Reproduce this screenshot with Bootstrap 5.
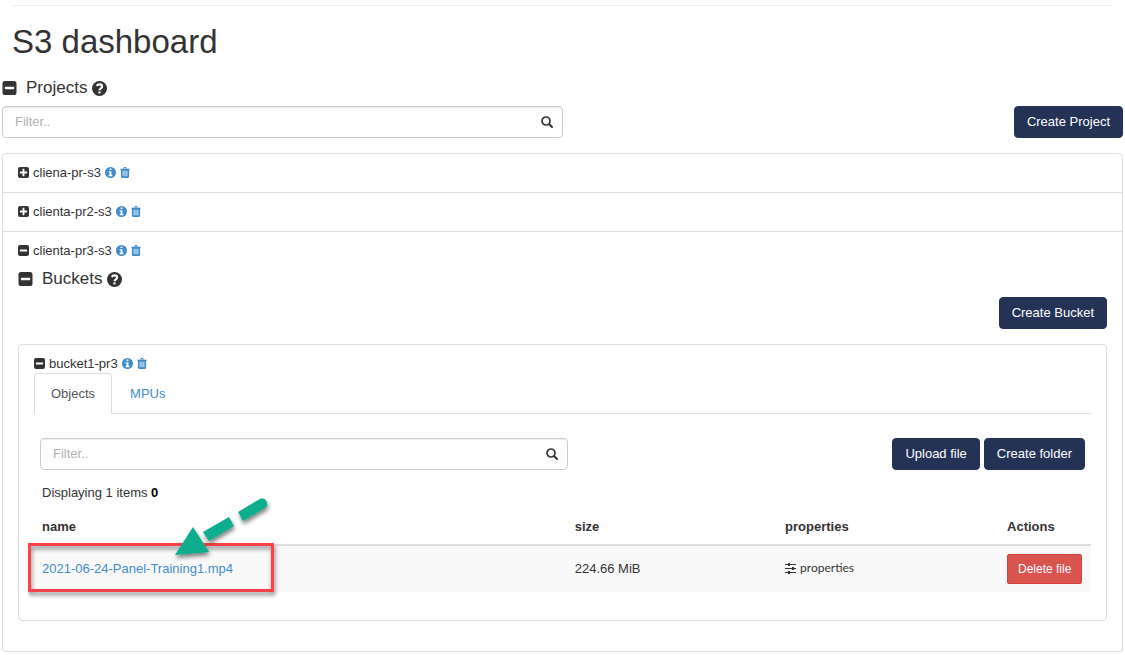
<!DOCTYPE html>
<html lang="en">
<head>
<meta charset="utf-8">
<meta name="viewport" content="width=device-width, initial-scale=1">
<title>S3 dashboard</title>
<link rel="stylesheet" href="https://cdn.jsdelivr.net/npm/bootstrap@5.3.0/dist/css/bootstrap.min.css">
<style>
  body { font-family: "Liberation Sans", Arial, sans-serif; font-size: 13px; line-height: 18px; color: #333; background: #fff; }
  a { color: #428bca; text-decoration: none; }
  .page { padding: 5px 2px 3px; }
  .top-rule { margin: 0 11px 0 10px; border-top: 1px solid #eee; opacity: 1; }
  h1 { font-size: 33px; line-height: 36px; font-weight: 400; margin: 18px 10px 17px; }
  .section-head { display: flex; align-items: center; height: 22px; }
  .section-head h2 { font-size: 17px; line-height: 22px; font-weight: 400; margin: 0 5px 0 9px; }
  .toolbar { margin: 7px 0 15px; }
  .icon-btn { border: 0; padding: 0; background: none; color: inherit; display: inline-flex; }
  svg { display: block; }
  .filter-box { width: 50%; }
  .tab-body .filter-box { width: calc(50% + 5px); }
  .filter-box .form-control { height: 32px; font-size: 13px; line-height: 18px; padding: 5px 36px 7px 12px; border-color: #ccc; border-radius: 4px; box-shadow: inset 0 1px 1px rgba(0,0,0,.075); color: #333; }
  .filter-box .form-control::placeholder { color: #b0b0b0; opacity: 1; }
  .filter-box .icon-btn { position: absolute; right: 10px; top: 10px; }
  .btn-navy { --bs-btn-bg: #243256; --bs-btn-color: #fff; --bs-btn-border-color: #243256; --bs-btn-hover-bg: #1b2745; --bs-btn-hover-color: #fff; --bs-btn-font-size: 13px; --bs-btn-line-height: 18px; --bs-btn-padding-x: 12px; --bs-btn-padding-y: 6px; --bs-btn-border-radius: 4px; }
  .btn-remove { --bs-btn-bg: #d9534f; --bs-btn-color: #fff; --bs-btn-border-color: #d43f3a; --bs-btn-hover-bg: #c9302c; --bs-btn-hover-color: #fff; --bs-btn-font-size: 12px; --bs-btn-line-height: 18px; --bs-btn-padding-x: 10px; --bs-btn-padding-y: 5px; --bs-btn-border-radius: 2px; }
  .btn { white-space: nowrap; }
  .btn-navy { height: 32px; }
  .list-group { --bs-list-group-border-color: #ddd; --bs-list-group-color: #333; --bs-list-group-item-padding-x: 15px; --bs-list-group-item-padding-y: 10px; --bs-list-group-border-radius: 4px; }
  .open-project { padding-bottom: 30px; }
  .item-line { display: flex; align-items: center; gap: 4px; height: 18px; }
  .item-line svg { margin-bottom: 1px; }
  .nav-tabs { --bs-nav-tabs-border-color: #ddd; --bs-nav-tabs-link-active-color: #555; --bs-nav-tabs-link-active-border-color: #ddd #ddd #fff; --bs-nav-tabs-border-radius: 4px; --bs-nav-link-color: #428bca; --bs-nav-link-padding-x: 16px; --bs-nav-link-padding-y: 10px; gap: 1px; line-height: 19px; }
  .tab-body { padding: 24px 6px 0; }
  .count-line { margin: 14px 0 8px; padding: 0 8px; }
  .files { --bs-table-color: #333; --bs-table-striped-color: #333; --bs-table-striped-bg: #f9f9f9; border-color: #ddd; table-layout: fixed; margin-bottom: 18px; }
  .files > :not(caption) > * > * { padding: 8px; border: 0; vertical-align: middle; }
  .files > thead > tr > th { border-bottom: 2px solid #ddd; }
  .col-name { width: 50.4%; }
  .col-size { width: 19.9%; }
  .col-prop { width: 21%; }
  .prop-link { font: 12px/18px Lato, sans-serif; color: #333; }
  .callout { position: absolute; left: -14px; top: -76px; pointer-events: none; }
</style>
</head>
<body>
<svg width="0" height="0" class="position-absolute" aria-hidden="true">
  <symbol id="minus" viewBox="0 0 12 12"><path fill="currentColor" fill-rule="evenodd" d="M2.2 0h7.6A2.2 2.2 0 0 1 12 2.2v7.6A2.2 2.2 0 0 1 9.8 12H2.2A2.2 2.2 0 0 1 0 9.8V2.2A2.2 2.2 0 0 1 2.2 0ZM2.4 5a.4.4 0 0 0-.4.4v1.2c0 .2.2.4.4.4h7.2c.2 0 .4-.2.4-.4V5.400a.4.4 0 0 0-.4-.4Z"/></symbol>
  <symbol id="plus" viewBox="0 0 12 12"><path fill="currentColor" fill-rule="evenodd" d="M2.2 0h7.6A2.2 2.2 0 0 1 12 2.2v7.6A2.2 2.2 0 0 1 9.8 12H2.2A2.2 2.2 0 0 1 0 9.8V2.2A2.2 2.2 0 0 1 2.2 0ZM5 2.4V5H2.400a.4.4 0 0 0-.4.4v1.200c0 .2.2.4.4.4H5v2.600c0 .2.2.4.4.4h1.200c.2 0 .4-.2.4-.4V7h2.600c.2 0 .4-.2.4-.4V5.400c0-.2-.2-.4-.4-.4H7V2.400c0-.2-.2-.4-.4-.4H5.400c-.2 0-.4.2-.4.4Z"/></symbol>
  <symbol id="info" viewBox="0 0 12 12"><circle cx="6" cy="6" r="6" fill="currentColor"/><path fill="#fff" d="M5 1.500h2v1.700H5zM4 4.500h3v4h1V10H4V8.500h1V6H4z"/></symbol>
  <symbol id="help" viewBox="0 0 14 14"><circle cx="7" cy="7" r="7" fill="currentColor"/><path fill="none" stroke="#fff" stroke-width="2" d="M4.500 4.700C5 3.500 6 3.100 7 3.100c1.300 0 2.400.8 2.400 2 0 1.700-2.400 1.700-2.400 3.600"/><path fill="#fff" d="M6 9.700h2v1.900H6z"/></symbol>
  <symbol id="trash" viewBox="0 0 11 12"><path fill="currentColor" fill-rule="evenodd" d="M3.500 1.800 4 .5Q4.200 0 4.700 0h1.600Q6.800 0 7 .5l.5 1.300H11v1h-1v7.700q0 1.500-1.300 1.500H2.300Q1 12 1 10.500V2.800H0v-1ZM4.600 1.800h1.800L6.200 1H4.800ZM3 4.200v6h.9v-6ZM5.050 4.200v6h.9v-6ZM7.100 4.200v6H8v-6Z"/></symbol>
  <symbol id="search" viewBox="0 0 12 12"><circle cx="5" cy="5" r="4" fill="none" stroke="currentColor" stroke-width="1.700"/><path d="m8 8 3 3" stroke="currentColor" stroke-width="2" stroke-linecap="round"/></symbol>
</svg>

<main class="page">
  <hr class="top-rule">
  <h1>S3 dashboard</h1>

  <section>
    <div class="section-head">
      <button class="icon-btn" type="button" aria-label="Collapse projects"><svg width="15" height="14"><use href="#minus"/></svg></button>
      <h2>Projects</h2>
      <svg width="15" height="15"><use href="#help"/></svg>
    </div>
    <div class="toolbar d-flex justify-content-between">
      <div class="filter-box position-relative">
        <input class="form-control" type="text" placeholder="Filter.." aria-label="Filter projects">
        <button class="icon-btn" type="button" aria-label="Search projects"><svg width="12" height="12"><use href="#search"/></svg></button>
      </div>
      <button class="btn btn-navy" type="button">Create Project</button>
    </div>

    <ul class="list-group">
      <li class="list-group-item">
        <div class="item-line">
          <button class="icon-btn" type="button" aria-label="Expand"><svg width="11" height="11"><use href="#plus"/></svg></button>
          <span>cliena-pr-s3</span>
          <a href="#" aria-label="Info"><svg width="11" height="11"><use href="#info"/></svg></a>
          <a href="#" aria-label="Delete"><svg width="10" height="11"><use href="#trash"/></svg></a>
        </div>
      </li>
      <li class="list-group-item">
        <div class="item-line">
          <button class="icon-btn" type="button" aria-label="Expand"><svg width="11" height="11"><use href="#plus"/></svg></button>
          <span>clienta-pr2-s3</span>
          <a href="#" aria-label="Info"><svg width="11" height="11"><use href="#info"/></svg></a>
          <a href="#" aria-label="Delete"><svg width="10" height="11"><use href="#trash"/></svg></a>
        </div>
      </li>
      <li class="list-group-item open-project">
        <div class="item-line">
          <button class="icon-btn" type="button" aria-label="Collapse"><svg width="11" height="11"><use href="#minus"/></svg></button>
          <span>clienta-pr3-s3</span>
          <a href="#" aria-label="Info"><svg width="11" height="11"><use href="#info"/></svg></a>
          <a href="#" aria-label="Delete"><svg width="10" height="11"><use href="#trash"/></svg></a>
        </div>
        <div class="section-head mt-2">
          <button class="icon-btn" type="button" aria-label="Collapse buckets"><svg width="15" height="14"><use href="#minus"/></svg></button>
          <h2>Buckets</h2>
          <svg width="15" height="15"><use href="#help"/></svg>
        </div>
        <div class="toolbar d-flex justify-content-end">
          <button class="btn btn-navy" type="button">Create Bucket</button>
        </div>

        <ul class="list-group">
          <li class="list-group-item">
            <div class="item-line">
              <button class="icon-btn" type="button" aria-label="Collapse"><svg width="11" height="11"><use href="#minus"/></svg></button>
              <span>bucket1-pr3</span>
              <a href="#" aria-label="Info"><svg width="11" height="11"><use href="#info"/></svg></a>
              <a href="#" aria-label="Delete"><svg width="10" height="11"><use href="#trash"/></svg></a>
            </div>
            <ul class="nav nav-tabs">
              <li class="nav-item"><a class="nav-link active" href="#" aria-current="page">Objects</a></li>
              <li class="nav-item"><a class="nav-link" href="#">MPUs</a></li>
            </ul>
            <div class="tab-body d-flex justify-content-between">
              <div class="filter-box position-relative">
                <input class="form-control" type="text" placeholder="Filter.." aria-label="Filter objects">
                <button class="icon-btn" type="button" aria-label="Search objects"><svg width="12" height="12"><use href="#search"/></svg></button>
              </div>
              <div class="d-flex gap-1">
                <button class="btn btn-navy" type="button">Upload file</button>
                <button class="btn btn-navy" type="button">Create folder</button>
              </div>
            </div>
            <p class="count-line">Displaying 1 items <b class="text-black">0</b></p>
            <table class="table table-striped files">
              <thead>
                <tr><th class="col-name">name</th><th class="col-size">size</th><th class="col-prop">properties</th><th>Actions</th></tr>
              </thead>
              <tbody>
                <tr>
                  <td>
                    <div class="position-relative">
                      <a href="#">2021-06-24-Panel-Training1.mp4</a>
                      <svg class="callout" width="256" height="120" aria-hidden="true">
                        <defs><filter id="soft" x="-20%" y="-20%" width="140%" height="150%"><feDropShadow dx="1" dy="3" stdDeviation="2" flood-color="#000" flood-opacity=".5"/></filter></defs>
                        <rect x="1.500" y="60.500" width="243" height="46" fill="none" stroke="#fc4346" stroke-width="3" filter="url(#soft)"/>
                        <g fill="#08ad8e" filter="url(#soft)">
                          <path d="M147 71 165 43 181 68Z"/>
                          <path d="M175 48 201 33 206 42 181 57Z"/>
                          <path d="M210 28 231 15.500A5 5 0 0 1 237 24L215 37Z"/>
                        </g>
                      </svg>
                    </div>
                  </td>
                  <td>224.66 MiB</td>
                  <td>
                    <a class="prop-link d-inline-flex align-items-center gap-1" href="#">
                      <svg width="11" height="11" viewBox="0 0 11 11"><path d="M0 1.500h11M0 5.500h11M0 9.500h11" stroke="#333"/><path d="M3 0h2v3H3zM7 4h2v3H7zM3 8h2v3H3z" fill="#333"/></svg>
                      properties
                    </a>
                  </td>
                  <td><button class="btn btn-remove" type="button">Delete file</button></td>
                </tr>
              </tbody>
            </table>
          </li>
        </ul>
      </li>
    </ul>
  </section>
</main>
<script src="https://cdn.jsdelivr.net/npm/bootstrap@5.3.0/dist/js/bootstrap.bundle.min.js"></script>
</body>
</html>
